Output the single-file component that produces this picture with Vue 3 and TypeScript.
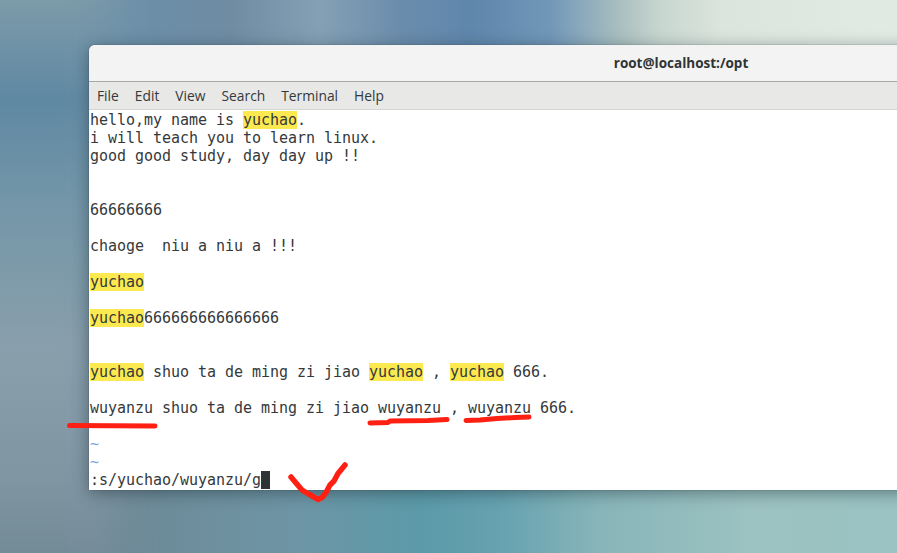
<script setup lang="ts">
interface Seg { t: string; hl?: boolean }
const menus: string[] = ['File', 'Edit', 'View', 'Search', 'Terminal', 'Help']
const lines: Seg[][] = [
  [{ t: 'hello,my name is ' }, { t: 'yuchao', hl: true }, { t: '.' }],
  [{ t: 'i will teach you to learn linux.' }],
  [{ t: 'good good study, day day up !!' }],
  [], [],
  [{ t: '66666666' }],
  [],
  [{ t: 'chaoge  niu a niu a !!!' }],
  [],
  [{ t: 'yuchao', hl: true }],
  [],
  [{ t: 'yuchao', hl: true }, { t: '666666666666666' }],
  [], [],
  [{ t: 'yuchao', hl: true }, { t: ' shuo ta de ming zi jiao ' }, { t: 'yuchao', hl: true }, { t: ' , ' }, { t: 'yuchao', hl: true }, { t: ' 666.' }],
  [],
  [{ t: 'wuyanzu shuo ta de ming zi jiao wuyanzu , wuyanzu 666.' }],
  [],
]
</script>

<template>
  <div class="desktop">
    <div class="wall-top"></div>
    <div class="wall-left"></div>
    <div class="window">
      <header class="titlebar">root@localhost:/opt</header>
      <nav class="menubar">
        <span v-for="m in menus" :key="m" class="menu">{{ m }}</span>
      </nav>
      <main class="term">
        <div v-for="(l, i) in lines" :key="i" class="line">
          <span v-for="(s, j) in l" :key="j" :class="{ hl: s.hl }">{{ s.t }}</span>
        </div>
        <div class="line tilde">~</div>
        <div class="line tilde">~</div>
        <div class="line">:s/yuchao/wuyanzu/g<span class="cursor"></span></div>
      </main>
    </div>
    <svg class="ink" width="897" height="553" viewBox="0 0 897 553" fill="none" stroke="#fe2012" stroke-linecap="round" stroke-linejoin="round">
      <path d="M69.500 425.500 L155 426" stroke-width="5" />
      <path d="M370 423 L388 422.500 L390 421 L428 420.500 L447 419.500" stroke-width="5" />
      <path d="M466 420.500 L480 420 L497 418.500 L515 417.500 L529 417" stroke-width="5" />
      <path d="M291 477 L296 483 L302 490 L307 493 L313 496.500 L318 499.500 L322 497.500 L326 492.500 L330 485 L334 481 L338 473.500 L345 465" stroke-width="5.500" />
    </svg>
  </div>
</template>

<style>
html, body { margin: 0; padding: 0; overflow: hidden; }
</style>

<style scoped>
.desktop {
  position: relative;
  width: 897px;
  height: 553px;
  overflow: hidden;
  background: linear-gradient(90deg, #6f8795 0, #8597a5 50px, #6e8a98 130px, #6d95a5 300px, #5b9aa8 420px, #66a2b0 500px, #88b5b9 600px, #9cc2c1 750px, #9bc3c3 897px);
}
.wall-top {
  position: absolute;
  inset: 0;
  background: linear-gradient(90deg, #7f9fa9 0, #6b8fa9 130px, #6f8ca3 230px, #84a0b4 320px, #6b8dac 400px, #5f86ab 470px, #7197b8 550px, #a9bfc0 620px, #c8d6d0 660px, #dbe4dd 720px, #e2eae4 897px);
  -webkit-mask-image: linear-gradient(180deg, #000 0, #000 180px, transparent 400px);
  mask-image: linear-gradient(180deg, #000 0, #000 180px, transparent 400px);
}
.wall-left {
  position: absolute;
  left: 0;
  top: 0;
  width: 200px;
  height: 553px;
  background: linear-gradient(180deg, #7d9ba9 0, #5f88a3 100px, #7396a8 200px, #8a9fac 350px, #7f95a2 480px, #738a97 553px);
  -webkit-mask-image: linear-gradient(90deg, #000 0, #000 60px, transparent 160px);
  mask-image: linear-gradient(90deg, #000 0, #000 60px, transparent 160px);
}
.window {
  position: absolute;
  left: 89px;
  top: 45px;
  width: 1184px;
  height: 445px;
  display: flex;
  flex-direction: column;
  overflow: hidden;
  border-radius: 6px 6px 0 0;
  background: #fff;
  box-shadow: 0 0 1px rgba(25, 35, 40, 0.85), 0 3px 16px rgba(20, 35, 45, 0.45);
}
.titlebar {
  height: 36px;
  flex: none;
  display: flex;
  align-items: center;
  justify-content: center;
  background: #f3f3f3;
  border-bottom: 1px solid #a8a8a5;
  font: 700 13.500px "Open Sans", "Noto Sans", sans-serif;
  color: #2e3436;
}
.menubar {
  height: 27px;
  flex: none;
  display: flex;
  align-items: center;
  gap: 16px;
  padding-left: 8px;
  background: #e8e8e7;
  border-bottom: 1px solid #d4d4d2;
  font: 400 13.800px "Open Sans", "Noto Sans", sans-serif;
  color: #33393b;
}
.term {
  flex: 1;
  padding-left: 1px;
  padding-top: 1px;
  font: 400 15px/18px "DejaVu Sans Mono", monospace;
  letter-spacing: -0.03px;
  color: #35393b;
  white-space: pre;
  background: #fff;
}
.line { height: 18px; }
.hl { background: #fce94f; }
.tilde { color: #7aa6da; }
.cursor {
  display: inline-block;
  width: 9px;
  height: 18px;
  vertical-align: top;
  background: #2e3436;
}
.ink {
  position: absolute;
  left: 0;
  top: 0;
  pointer-events: none;
}
</style>
